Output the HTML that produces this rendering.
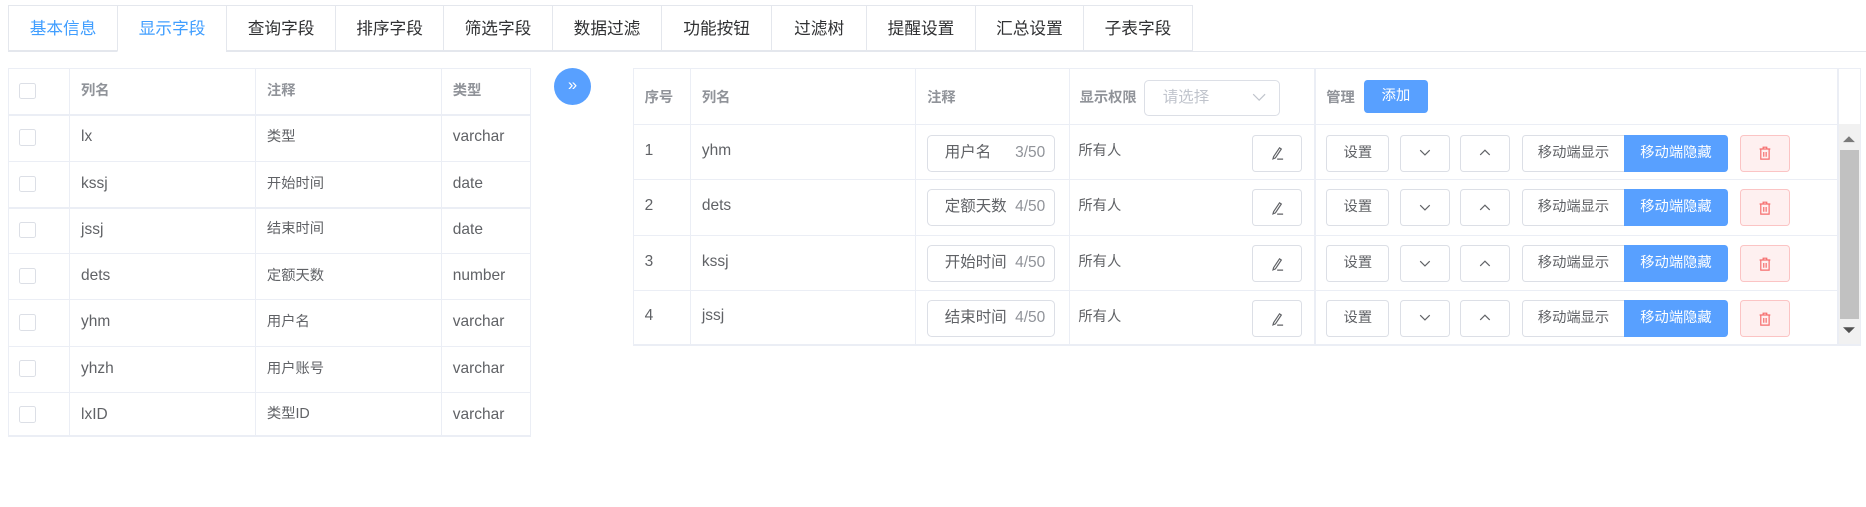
<!DOCTYPE html>
<html><head><meta charset="utf-8"><style>
*{box-sizing:border-box;margin:0;padding:0}
html,body{width:1866px;height:507px;overflow:hidden;background:#fff}
#root{zoom:1.1916;position:relative;width:1566px;height:426px;font-family:"Liberation Sans","Noto Sans CJK SC",sans-serif;color:#606266;font-size:13px}
.a{position:absolute}
.tab{position:absolute;top:4px;height:40px;border:1px solid #e4e7ed;border-right:none;background:#fff;line-height:38px;text-align:center;font-size:14px;color:#303133}
.blue{color:#409eff}
.hl{position:absolute;height:1px;background:#ebeef5}
.vl{position:absolute;width:1px;background:#ebeef5}
.cb{position:absolute;width:14px;height:14px;border:1px solid #dcdfe6;border-radius:2px;background:#fff}
.th{position:absolute;font-size:12px;color:#909399;font-weight:bold}
.td{position:absolute;font-size:13px;color:#606266}
.c{position:absolute;white-space:nowrap;color:#606266}
.btn{position:absolute;border:1px solid #dcdfe6;border-radius:3px;background:#fff;text-align:center;font-size:12px;color:#606266}
</style></head><body><div id="root">
<div class="hl" style="left:7px;top:43px;width:1559px;background:#e4e7ed"></div>
<div class="tab blue" style="left:7px;width:91px;height:39px;background:#fff">基本信息</div>
<div class="tab blue" style="left:98px;width:92px;border-bottom:1px solid #fff">显示字段</div>
<div class="tab" style="left:190px;width:91px;height:39px">查询字段</div>
<div class="tab" style="left:281px;width:91px;height:39px">排序字段</div>
<div class="tab" style="left:372px;width:91px;height:39px">筛选字段</div>
<div class="tab" style="left:463px;width:92px;height:39px">数据过滤</div>
<div class="tab" style="left:555px;width:92px;height:39px">功能按钮</div>
<div class="tab" style="left:647px;width:80px;height:39px">过滤树</div>
<div class="tab" style="left:727px;width:91px;height:39px">提醒设置</div>
<div class="tab" style="left:818px;width:91px;height:39px">汇总设置</div>
<div class="tab" style="left:909px;width:92px;height:39px;border-right:1px solid #e4e7ed">子表字段</div>

<div class="a" style="left:7px;top:57px;width:439px;height:310px;border:1px solid #ebeef5;border-bottom:2px solid #ebeef5"></div>
<div class="vl" style="left:58px;top:57px;height:310px"></div>
<div class="vl" style="left:214px;top:57px;height:310px"></div>
<div class="vl" style="left:370px;top:57px;height:310px"></div>
<div id="left"></div>

<div class="a" style="left:465px;top:57px;width:31px;height:31px;border-radius:50%;background:#58a0ff;color:#fff;text-align:center;line-height:28px;font-size:14px">»</div>

<div class="a" style="left:531px;top:57px;width:1031px;height:233px;border:1px solid #ebeef5;border-bottom:2px solid #ebeef5"></div>
<div class="vl" style="left:579px;top:57px;height:233px"></div>
<div class="vl" style="left:768px;top:57px;height:233px"></div>
<div class="vl" style="left:897px;top:57px;height:233px"></div>
<div class="vl" style="left:1103px;top:57px;height:233px"></div>
<div class="vl" style="left:1542px;top:57px;height:233px"></div>
<div class="hl" style="left:531px;top:104px;width:1031px"></div>
<div class="hl" style="left:531px;top:150px;width:1011px"></div>
<div class="hl" style="left:531px;top:197px;width:1011px"></div>
<div class="hl" style="left:531px;top:243px;width:1011px"></div>
<div class="th" style="left:541px;top:72px">序号</div><div class="th" style="left:589px;top:72px">列名</div><div class="th" style="left:778px;top:72px">注释</div><div class="th" style="left:906px;top:72px">显示权限</div>
<div class="a" style="left:960px;top:67px;width:114px;height:30px;border:1px solid #dcdfe6;border-radius:4px;color:#c0c4cc;font-size:13px;line-height:28px;padding-left:15px">请选择<svg class="a" style="left:90px;top:10px" width="12" height="8"><path d="M1 1l5 5 5-5" fill="none" stroke="#c0c4cc" stroke-width="1"/></svg></div>
<div class="th" style="left:1113px;top:72px">管理</div>
<div class="a" style="left:1145px;top:67px;width:53px;height:28px;border-radius:3px;background:#58a0ff;color:#fff;font-size:12px;text-align:center;line-height:28px">添加</div>
<div class="a" style="left:1543px;top:104px;width:18px;height:185px;background:#f1f1f1"></div>
<div class="a" style="left:1544px;top:126px;width:16px;height:142px;background:#c1c1c1"></div>
<svg class="a" style="left:1547px;top:113px" width="10" height="8"><path d="M0 6L5 1 10 6Z" fill="#7a7a7a"/></svg>
<svg class="a" style="left:1547px;top:274px" width="10" height="8"><path d="M0 1L5 6 10 1Z" fill="#505050"/></svg>

<div id="rows"></div>
</div>
<script>
var L=[["列名","注释","类型"],["lx","类型","varchar"],["kssj","开始时间","date"],["jssj","结束时间","date"],["dets","定额天数","number"],["yhm","用户名","varchar"],["yhzh","用户账号","varchar"],["lxID","类型ID","varchar"]];
var ys=[57,96,135,174,212,251,290,329,367];
var g="";
L.forEach(function(r,i){var y=ys[i],hh=ys[i+1]-y;
if(i>0)g+='<div class="hl" style="left:7px;top:'+y+'px;width:439px"></div>';
g+='<div class="cb" style="left:16px;top:'+(y+(hh-14)/2)+'px"></div>';
var hs=i==0?'font-size:12px;font-weight:bold;color:#909399;':'';
g+='<div class="c" style="left:68px;top:'+y+'px;height:'+hh+'px;line-height:'+hh+'px;'+(hs||'font-size:13px;')+'">'+r[0]+'</div>';
g+='<div class="c" style="left:224px;top:'+y+'px;height:'+hh+'px;line-height:'+hh+'px;font-size:12px;'+hs+'">'+r[1]+'</div>';
g+='<div class="c" style="left:380px;top:'+y+'px;height:'+hh+'px;line-height:'+hh+'px;'+(hs||'font-size:13px;')+'">'+r[2]+'</div>';
});
document.getElementById("left").innerHTML=g;

var d=[["1","yhm","用户名","3/50",104],["2","dets","定额天数","4/50",150],["3","kssj","开始时间","4/50",197],["4","jssj","结束时间","4/50",243]];
var h="";
d.forEach(function(r){var y=r[4];var c=y+9;
h+='<div class="td" style="left:541px;top:'+(y+15)+'px">'+r[0]+'</div>';
h+='<div class="td" style="left:589px;top:'+(y+15)+'px">'+r[1]+'</div>';
h+='<div class="a" style="left:778px;top:'+c+'px;width:107px;height:31px;border:1px solid #dcdfe6;border-radius:4px;font-size:13px;line-height:29px"><span class="a" style="left:14px">'+r[2]+'</span><span class="a" style="right:7px;color:#909399">'+r[3]+'</span></div>';
h+='<div class="td" style="left:905px;top:'+(y+13)+'px;font-size:12px">所有人</div>';
h+='<div class="btn" style="left:1051px;top:'+c+'px;width:42px;height:31px"><svg style="margin-top:9px" width="12" height="12"><path d="M3 9L8 1.5 9.5 2.5 4.5 10 2.5 10.8Z M6 11H11" fill="none" stroke="#606266" stroke-width="1"/></svg></div>';
h+='<div class="btn" style="left:1113px;top:'+c+'px;width:53px;height:31px;line-height:29px">设置</div>';
h+='<div class="btn" style="left:1175px;top:'+c+'px;width:42px;height:31px"><svg style="margin-top:11px" width="10" height="6"><path d="M1 1l4 4 4-4" fill="none" stroke="#606266"/></svg></div>';
h+='<div class="btn" style="left:1225px;top:'+c+'px;width:42px;height:31px"><svg style="margin-top:11px" width="10" height="6"><path d="M1 5l4-4 4 4" fill="none" stroke="#606266"/></svg></div>';
h+='<div class="btn" style="left:1277px;top:'+c+'px;width:87px;height:31px;line-height:29px;border-radius:3px 0 0 3px">移动端显示</div>';
h+='<div class="a" style="left:1363px;top:'+c+'px;width:87px;height:31px;line-height:31px;background:#58a0ff;color:#fff;font-size:12px;text-align:center;border-radius:0 3px 3px 0">移动端隐藏</div>';
h+='<div class="btn" style="left:1460px;top:'+c+'px;width:42px;height:31px;background:#fef0f0;border-color:#fbc4c4"><svg style="margin-top:9px" width="10" height="12"><path d="M0.5 2.5H9.5M3.5 2.5V1H6.5V2.5M1.5 2.5V11H8.5V2.5M4 5V9M6 5V9" fill="none" stroke="#f56c6c"/></svg></div>';
});
document.getElementById("rows").innerHTML=h;
</script>
</body></html>
